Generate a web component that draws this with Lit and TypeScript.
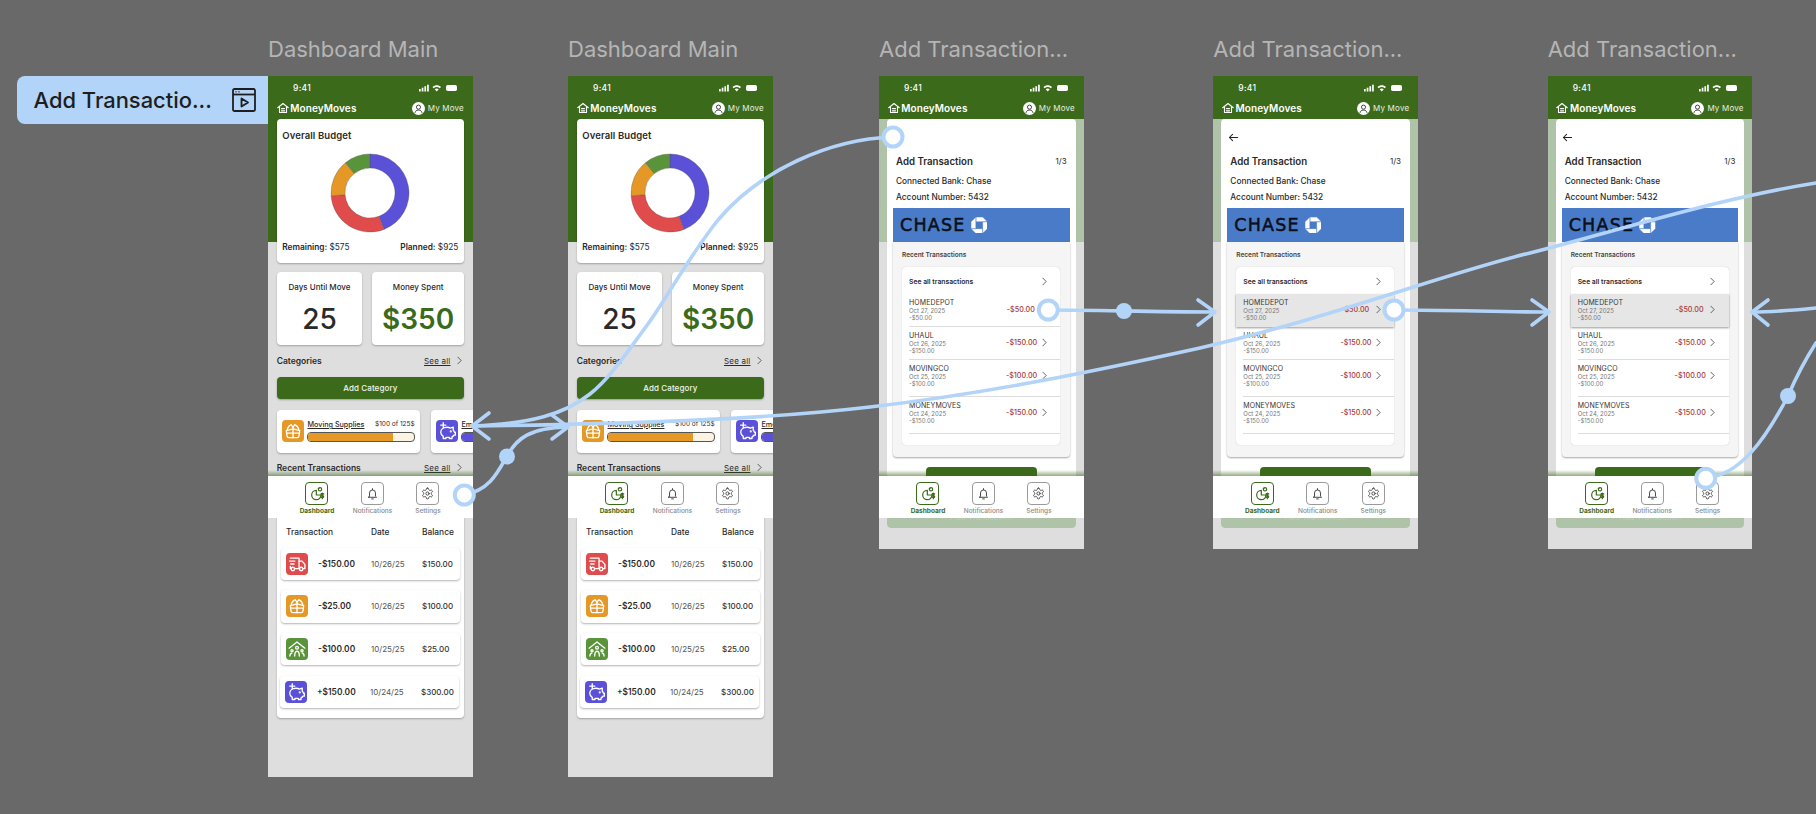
import { LitElement, html, css, svg } from "lit";
import { customElement } from "lit/decorators.js";

const GREEN = "#3a6a1a";
const F = (n: string, c: string, s: number, body: any) => html`<svg class=${n} viewBox="0 0 24 24" fill="none" stroke=${c} stroke-width=${s} stroke-linecap="round" stroke-linejoin="round">${body}</svg>`;

const truck = svg`<path d="M4 5h10.500V17.500H10"/><path d="M3 8.500h6.500M4.500 12h4"/><path d="M14.500 8.500h3.500l3.500 4V17.500h-2"/><path d="M4 15v2.500h.8"/><circle cx="7" cy="18" r="2.100"/><circle cx="17" cy="18" r="2.100"/>`;
const box = svg`<path d="M4 11.500 12 9.500l8 2-.8 6.500c-.1 1.200-1 2-2.200 2H7c-1.200 0-2.100-.8-2.200-2z"/><path d="M12 9.500V20M4.500 14.500h15"/><path d="M5 10.500C6 7 8 5 10 4.500L12 8l2-3.500c2 .5 4 2.500 5 6"/>`;
const people = svg`<path d="M2.500 11 12 3.500l9.500 7.500"/><circle cx="12" cy="10.500" r="1.700"/><path d="M9.200 20.500c0-3.500 1-5.800 2.800-5.800s2.800 2.300 2.800 5.800"/><circle cx="6" cy="14" r="1.300"/><circle cx="18" cy="14" r="1.300"/><path d="M3.500 20.500c0-2 .6-3.400 2.300-3.600M20.500 20.500c0-2-.6-3.400-2.300-3.600"/>`;
const piggy = svg`<path d="M4.500 13.500c0-3.500 3-6 7.500-6 1.500 0 3 .3 4 1l3.500-1.200v3.700c.8.800 1.200 1.500 1.500 2.500h1v3.500h-1.700c-.5 1-1.300 1.700-2.300 2.300V21h-3.200v-1.400h-4V21H7.500v-2.600C5.800 17.500 4.500 15.500 4.500 13.500z"/><path d="M7.500 2v6M4.500 5h6"/><circle cx="16.500" cy="12.500" r=".5"/>`;

const chevron = html`<svg class="chev" viewBox="0 0 6 10" fill="none" stroke="#444" stroke-width="1" stroke-linecap="round" stroke-linejoin="round"><path d="M1 1l4 4-4 4"/></svg>`;

const shared = css`
  :host { display: block; font-family: "Inter", "Liberation Sans", sans-serif; color: #2a2a2a; }
  * { box-sizing: border-box; }
  .phone { width: 204.7px; overflow: hidden; position: relative; }
  .status { height: 22px; padding: 2px 14.7px 0 25px; display: flex; align-items: center; justify-content: space-between; color: #fff; font-size: 8.500px; font-weight: 500; letter-spacing: .3px; }
  .status svg { width: 39px; height: 8px; }
  .head { height: 20px; margin-bottom: 1px; display: flex; align-items: center; padding: 0 8.7px; color: #fff; }
  .head .house { width: 12px; height: 12px; margin-right: 1.500px; }
  .brand { font-size: 10px; font-weight: 600; letter-spacing: .1px; flex: 1; }
  .avatar { width: 13px; height: 13px; margin-right: 3px; }
  .me { font-size: 8px; color: #e8efe3; letter-spacing: .2px; }
  .nav { position: absolute; left: 0; right: 0; top: 400px; height: 42.3px; background: #fff; display: flex; justify-content: center; padding: 6px 0 0 4.300px; z-index: 2; }
  .nav::before { content: ""; position: absolute; left: 0; right: 0; top: -6px; height: 6px; background: linear-gradient(rgba(58,106,26,0), rgba(58,106,26,.55)); }
  .nitem { width: 55.500px; display: flex; flex-direction: column; align-items: center; gap: 2px; font-size: 6.500px; line-height: 9px; color: #8a8a8a; font-weight: 500; white-space: nowrap; }
  .nbox { width: 23px; height: 23px; border: 1px solid #9a9a9a; border-radius: 4px; display: flex; align-items: center; justify-content: center; }
  .nbox svg { width: 13px; height: 13px; }
  .nitem.on { color: #3a6a1a; font-weight: 700; }
  .nitem.on .nbox { border-color: #3a6a1a; }
  .nitem.on .nbox svg { width: 16px; height: 16px; }
`;

const chrome = () => html`
  <div class="status"><span>9:41</span>
    <svg viewBox="0 0 39 8"><g fill="#fff"><rect x="0" y="5" width="1.700" height="2.500"/><rect x="2.700" y="3.700" width="1.700" height="3.800"/><rect x="5.400" y="2.200" width="1.700" height="5.300"/><rect x="8.100" y=".7" width="1.700" height="6.800"/><rect x="27" y="1" width="11" height="6" rx="1.800"/></g><path d="M13.500 3c2.500-2.300 6-2.300 8.500 0l-1.200 1.300c-1.800-1.600-4.300-1.600-6.100 0z M15.700 5.200c1.300-1.100 2.800-1.100 4.100 0L17.750 7.400z" fill="#fff"/></svg>
  </div>
  <div class="head">
    ${F("house", "#fff", 2.2, svg`<path d="M1.500 11.500 12 3l10.500 8.500"/><path d="M5 10v11h14V10"/><path d="M9 13h6M9 16.500h6M9 20h6"/>`)}
    <span class="brand">MoneyMoves</span>
    <svg class="avatar" viewBox="0 0 24 24"><circle cx="12" cy="12" r="12" fill="#fff"/><circle cx="12" cy="9.500" r="3.800" fill="none" stroke="#333" stroke-width="1.700"/><path d="M5.500 20c.5-3.500 3-5 6.500-5s6 1.500 6.500 5" fill="none" stroke="#333" stroke-width="1.700"/></svg>
    <span class="me">My Move</span>
  </div>`;

const nav = () => html`<div class="nav">
  <div class="nitem on"><div class="nbox">${F("", GREEN, 1.8, svg`<path d="M11 6.500a7 7 0 1 0 7 7h-7z"/><path d="M14 3.500h1"/><circle cx="16.500" cy="5" r="2.500"/><path d="M22 12c-1-1.200-4-1.200-4 .8 0 2 4 1 4 3 0 1.900-3 2-4 .6M20 10.500v8.500"/>`)}</div>Dashboard</div>
  <div class="nitem"><div class="nbox">${F("", "#444", 1.8, svg`<path d="M6.500 17v-6a5.500 5.500 0 0 1 11 0v6l2 2h-15z"/><path d="M10.500 22h3M12 3v2"/>`)}</div>Notifications</div>
  <div class="nitem"><div class="nbox">${F("", "#444", 1.7, svg`<path d="M12.220 2h-.44a2 2 0 0 0-2 2v.18a2 2 0 0 1-1 1.730l-.43.25a2 2 0 0 1-2 0l-.15-.08a2 2 0 0 0-2.730.73l-.22.38a2 2 0 0 0 .73 2.730l.15.1a2 2 0 0 1 1 1.720v.51a2 2 0 0 1-1 1.740l-.15.09a2 2 0 0 0-.73 2.730l.22.38a2 2 0 0 0 2.730.73l.15-.08a2 2 0 0 1 2 0l.43.25a2 2 0 0 1 1 1.730V20a2 2 0 0 0 2 2h.44a2 2 0 0 0 2-2v-.18a2 2 0 0 1 1-1.730l.43-.25a2 2 0 0 1 2 0l.15.08a2 2 0 0 0 2.730-.73l.22-.39a2 2 0 0 0-.73-2.730l-.15-.08a2 2 0 0 1-1-1.740v-.5a2 2 0 0 1 1-1.740l.15-.09a2 2 0 0 0 .73-2.730l-.22-.38a2 2 0 0 0-2.730-.73l-.15.08a2 2 0 0 1-2 0l-.43-.25a2 2 0 0 1-1-1.730V4a2 2 0 0 0-2-2z"/><circle cx="12" cy="12" r="3"/>`)}</div>Settings</div>
</div>`;

function arc(a0: number, a1: number, R = 39, r = 25, c = 40) {
  const p = (a: number, q: number) => { const t = (a * Math.PI) / 180; return `${(c + q * Math.sin(t)).toFixed(2)} ${(c - q * Math.cos(t)).toFixed(2)}`; };
  const big = a1 - a0 > 180 ? 1 : 0;
  return `M${p(a0, R)}A${R} ${R} 0 ${big} 1 ${p(a1, R)}L${p(a1, r)}A${r} ${r} 0 ${big} 0 ${p(a0, r)}Z`;
}

const DONUT = [
  { a: 0, b: 159, c: "#5b50d8" },
  { a: 159, b: 266, c: "#e04b4c" },
  { a: 266, b: 321, c: "#e59826" },
  { a: 321, b: 360, c: "#5a943a" },
];

const TX = [
  { c: "#e04b4c", i: truck, amt: "-$150.00", date: "10/26/25", bal: "$150.00" },
  { c: "#e59826", i: box, amt: "-$25.00", date: "10/26/25", bal: "$100.00" },
  { c: "#5a943a", i: people, amt: "-$100.00", date: "10/25/25", bal: "$25.00" },
  { c: "#5b50d8", i: piggy, amt: "+$150.00", date: "10/24/25", bal: "$300.00" },
];

@customElement("dash-phone")
class DashPhone extends LitElement {
  static styles = [shared, css`
    .phone { height: 700.7px; background: linear-gradient(#3a6a1a 166px, #dedede 166px); }
    .body { padding: 0 8.700px; }
    .card { background: #fff; border-radius: 4px; box-shadow: 0 1px 2px rgba(0,0,0,.28); }
    .overall { height: 143.700px; padding: 11px 5.600px 0; display: flex; flex-direction: column; }
    .overall h3 { margin: 0; font-size: 9.500px; line-height: 12px; font-weight: 600; letter-spacing: .1px; }
    .donut { width: 80px; height: 80px; margin: 11px auto 9px; display: block; }
    .foot { display: flex; justify-content: space-between; font-size: 8.300px; line-height: 10px; }
    .foot b { font-weight: 600; }
    .stats { display: grid; grid-template-columns: 85.600px 1fr; gap: 10px; margin-top: 9.300px; }
    .stat { height: 72.700px; display: flex; flex-direction: column; align-items: center; padding-top: 10px; font-size: 8px; line-height: 10px; font-weight: 500; }
    .num { font-size: 28px; line-height: 34px; font-weight: 500; margin-top: 10.500px; }
    .num.g { color: #3a6a1a; font-weight: 600; }
    .sec { height: 12px; display: flex; align-items: center; font-size: 8.500px; font-weight: 600; margin-top: 10.300px; }
    .sec.rt { margin-top: 9.300px; }
    .sec .t { flex: 1; white-space: nowrap; }
    .see { font-weight: 400; font-size: 8px; text-decoration: underline; margin-right: 6px; letter-spacing: .2px; }
    .chev { width: 5px; height: 9px; margin-right: 2.500px; }
    .add { height: 22.600px; margin-top: 9.700px; background: #3a6a1a; color: #f0f4ec; border-radius: 4px; display: flex; align-items: center; justify-content: center; font-size: 8px; font-weight: 500; box-shadow: 0 1px 2px rgba(0,0,0,.3); letter-spacing: .1px; }
    .cats { display: flex; gap: 10.700px; margin-top: 10.700px; width: 320px; }
    .cat { width: 143.300px; height: 42.700px; padding: 10px 5.300px; display: flex; gap: 3.500px; flex: none; }
    .tile { width: 22px; height: 22px; border-radius: 4px; flex: none; display: flex; align-items: center; justify-content: center; }
    .tile svg { width: 20px; height: 20px; }
    .cinfo { flex: 1; min-width: 0; }
    .ctop { display: flex; justify-content: space-between; align-items: center; font-size: 6.500px; line-height: 9px; height: 10px; margin-top: -.5px; }
    .ctop u { font-size: 7.200px; font-weight: 500; }
    .bar { margin-top: 3px; height: 10px; border: .7px solid #555; border-radius: 4px; background: #fdf3e2; overflow: hidden; }
    .bar i { display: block; height: 100%; }
    .recent { margin-top: 6px; height: 237.700px; padding: 46px 4.300px 0; }
    .hd, .tx { display: grid; grid-template-columns: 32px 53px 51px 1fr; align-items: center; padding-left: 5px; font-size: 8px; white-space: nowrap; }
    .hd { height: 12px; font-weight: 500; font-size: 8.400px; margin-bottom: 9.700px; }
    .hd span:first-child { grid-column: span 2; }
    .tx { height: 32.400px; margin-bottom: 10.300px; border-radius: 4px; background: #fff; box-shadow: 0 1px 2px rgba(0,0,0,.3); }
    .tx b { font-weight: 600; font-size: 8.400px; }
    .tx .d { color: #555; }
    .tx .bl { font-weight: 500; color: #333; }
    .tx.shift { margin-left: -1px; margin-right: 1px; }
  `];
  render() {
    return html`<div class="phone">
      ${chrome()}
      <div class="body">
        <div class="card overall">
          <h3>Overall Budget</h3>
          <svg class="donut" viewBox="0 0 80 80">${DONUT.map((d) => svg`<path d=${arc(d.a, d.b)} fill=${d.c} stroke="#555" stroke-width=".35"/>`)}</svg>
          <div class="foot"><span><b>Remaining:</b> $575</span><span><b>Planned:</b> $925</span></div>
        </div>
        <div class="stats">
          <div class="card stat">Days Until Move<div class="num">25</div></div>
          <div class="card stat">Money Spent<div class="num g">$350</div></div>
        </div>
        <div class="sec"><span class="t">Categories</span><span class="see">See all</span>${chevron}</div>
        <div class="add">Add Category</div>
        <div class="cats">
          <div class="card cat"><div class="tile" style="background:#e59826">${F("", "#fff", 1.6, box)}</div>
            <div class="cinfo"><div class="ctop"><u>Moving Supplies</u><span>$100 of 125$</span></div><div class="bar"><i style="width:80%;background:#e59826"></i></div></div></div>
          <div class="card cat"><div class="tile" style="background:#5b50d8">${F("", "#fff", 1.6, piggy)}</div>
            <div class="cinfo"><div class="ctop"><u>Emergency Fund</u><span>$50 of 150$</span></div><div class="bar"><i style="width:40%;background:#5b50d8"></i></div></div></div>
        </div>
        <div class="sec rt"><span class="t">Recent Transactions</span><span class="see">See all</span>${chevron}</div>
        <div class="card recent">
          <div class="hd"><span>Transaction</span><span>Date</span><span>Balance</span></div>
          ${TX.map((t, i) => html`<div class="tx ${i === 3 ? "shift" : ""}">
            <div class="tile" style="background:${t.c}">${F("", "#fff", 1.6, t.i)}</div>
            <b>${t.amt}</b><span class="d">${t.date}</span><span class="bl">${t.bal}</span></div>`)}
        </div>
      </div>
      ${nav()}
    </div>`;
  }
}

const ROWS = [
  { n: "HOMEDEPOT", d: "Oct 27, 2025", a: "$50.00", h: 32.7 },
  { n: "UHAUL", d: "Oct 26, 2025", a: "$150.00", h: 33 },
  { n: "MOVINGCO", d: "Oct 25, 2025", a: "$100.00", h: 37 },
  { n: "MONEYMOVES", d: "Oct 24, 2025", a: "$150.00", h: 37.6 },
];

@customElement("txn-phone")
class TxnPhone extends LitElement {
  static properties = { selected: { type: Boolean } };
  selected = false;
  static styles = [shared, css`
    .phone { height: 473px; background: linear-gradient(#3a6a1a 43px, #aec3a8 43px, #aec3a8 166px, #dedede 166px); }
    .sheet { margin: 0 8px; height: 409px; background: #fff; border-radius: 4px; padding: 12px 6px 0; display: flex; flex-direction: column; }
    .back { height: 12px; width: 12px; }
    .back svg { width: 11px; height: 11px; display: block; margin: .5px 0 0 .500px; }
    .tt { display: flex; justify-content: space-between; margin: 12.700px 3px 0 3px; height: 12px; align-items: center; font-size: 9.700px; font-weight: 600; }
    .tt span:last-child { font-size: 8px; font-weight: 400; transform: translateY(-1.500px); }
    .ln { padding-left: 3px; font-size: 8.300px; line-height: 10px; font-weight: 500; margin-top: 8.300px; }
    .ln + .ln { margin-top: 6px; }
    .banner { height: 34px; margin-top: 6px; background: #4a7bc8; flex: none; display: flex; align-items: center; padding-left: 7px; gap: 5px; }
    .chase { font-family: "DejaVu Sans", sans-serif; font-weight: 400; font-size: 17.500px; color: #0c0f18; letter-spacing: 1.200px; line-height: 20px; -webkit-text-stroke: .5px #0c0f18; }
    .banner svg { width: 16.500px; height: 16.500px; }
    .panel { background: #f5f5f5; height: 214.700px; padding: 9px 9.700px 0 9px; border-radius: 0 0 4px 4px; box-shadow: 0 1px 2px rgba(0,0,0,.35); flex: none; }
    .ph { font-size: 6.500px; line-height: 8px; font-weight: 600; color: #444; }
    .list { margin-top: 8.300px; height: 177.700px; background: #fff; border-radius: 4px; box-shadow: 0 0 1px rgba(0,0,0,.25); }
    .all { height: 26.700px; padding: 2px 13.300px 0 7px; display: flex; align-items: center; justify-content: space-between; font-size: 6.800px; font-weight: 600; }
    .chev { width: 5px; height: 9px; flex: none; }
    .row { margin-left: 7px; padding: 5px 13.300px 0 0; border-bottom: 1px solid #dcdcdc; display: flex; align-items: flex-start; }
    .row.sel { margin-left: 0; padding-left: 7px; background: #e6e6e6; border-bottom: 0; box-shadow: 0 1px 2px rgba(0,0,0,.4); }
    .inf { flex: 1; font-size: 6px; line-height: 7.300px; color: #777; }
    .inf b { display: block; font-size: 7px; font-weight: 400; color: #333; letter-spacing: .1px; line-height: 8px; }
    .am { font-size: 7.200px; color: #a83a3a; font-weight: 500; margin-right: 4.500px; line-height: 22px; }
    .am.first { margin-right: 6.800px; }
    .row .chev { margin-top: 6.500px; }
    .next { flex: none; width: 111px; height: 24px; margin: 10px auto 0; background: #3a6a1a; border-radius: 4px; display: flex; align-items: center; justify-content: center; color: #dfe8d8; font-size: 8px; }
    .ghost { flex: 1; margin: 0 -6px; background: #aec3a8; border-radius: 0 0 4px 4px; color: #bfcfba; font-size: 8px; display: flex; align-items: flex-end; justify-content: center; padding-bottom: 6px; }
  `];
  render() {
    return html`<div class="phone">
      ${chrome()}
      <div class="sheet">
        <div class="back">${F("", "#222", 2.2, svg`<path d="M21 12H3M10 5l-7 7 7 7"/>`)}</div>
        <div class="tt"><span>Add Transaction</span><span>1/3</span></div>
        <div class="ln">Connected Bank: Chase</div>
        <div class="ln">Account Number: 5432</div>
        <div class="banner"><span class="chase">CHASE</span>
          <svg viewBox="0 0 16 16" fill="#fff" stroke="#4a7bc8" stroke-width=".5"><polygon points="4.700,0 11.300,0 16,4.700 4.700,4.700"/><polygon points="16,4.700 16,11.300 11.300,16 11.300,4.700"/><polygon points="11.300,16 4.700,16 0,11.300 11.300,11.300"/><polygon points="0,11.300 0,4.700 4.700,0 4.700,11.300"/></svg>
        </div>
        <div class="panel">
          <div class="ph">Recent Transactions</div>
          <div class="list">
            <div class="all"><span>See all transactions</span>${chevron}</div>
            ${ROWS.map((r, i) => html`<div class="row ${i === 0 && this.selected ? "sel" : ""}" style="height:${r.h}px">
              <div class="inf"><b>${r.n}</b>${r.d}<br />-${r.a}</div>
              <span class="am ${i === 0 ? "first" : ""}">-${r.a}</span>${chevron}</div>`)}
          </div>
        </div>
        <div class="next">Next</div>
        <div class="ghost">Add Transaction</div>
      </div>
      ${nav()}
    </div>`;
  }
}

const FRAMES = [
  { x: 268, t: "Dashboard Main", k: "d" },
  { x: 568, t: "Dashboard Main", k: "d" },
  { x: 879, t: "Add Transaction...", k: "t" },
  { x: 1213.3, t: "Add Transaction...", k: "s" },
  { x: 1547.7, t: "Add Transaction...", k: "s" },
];

@customElement("app-root")
export class AppRoot extends LitElement {
  static styles = css`
    :host { display: block; width: 1816px; height: 814px; position: relative; overflow: hidden; background: #696969; font-family: "Inter", "Liberation Sans", sans-serif; }
    * { box-sizing: border-box; }
    .frame { position: absolute; top: 35px; }
    .title { height: 41px; font-size: 22px; line-height: 28px; color: #b5b5b5; white-space: nowrap; }
    .pill { position: absolute; left: 17.300px; top: 76px; width: 250.700px; height: 47.700px; background: #b3d4f9; border-radius: 8px 0 0 8px; display: flex; align-items: center; padding: 0 12px 0 16.300px; justify-content: space-between; color: #1e1e1e; font-size: 21.900px; font-weight: 500; white-space: nowrap; }
    .pill svg { width: 24px; height: 24px; flex: none; }
    .wires { position: absolute; inset: 0; width: 1816px; height: 814px; pointer-events: none; z-index: 5; }
  `;
  render() {
    const W = "#b3d4f9";
    return html`
      ${FRAMES.map((f) => html`<div class="frame" style="left:${f.x}px">
        <div class="title">${f.t}</div>
        ${f.k === "d" ? html`<dash-phone></dash-phone>` : html`<txn-phone ?selected=${f.k === "s"}></txn-phone>`}
      </div>`)}
      <div class="pill"><span>Add Transactio...</span>
        <svg viewBox="0 0 24 24" fill="none" stroke="#1e1e1e" stroke-width="1.800" stroke-linejoin="round"><rect x="1" y="1" width="22" height="22" rx="1.500"/><path d="M1 6.500h22"/><path d="M3.500 3.800h1M6.500 3.800h1" stroke-width="1.500"/><path d="M9.500 10.500l6.500 4-6.500 4z"/></svg>
      </div>
      <svg class="wires" viewBox="0 0 1816 814" fill="none" stroke=${W} stroke-width="3.600" stroke-linecap="round" stroke-linejoin="round">
        <path d="M464 495C490 490 498 472 507 456C517 438 530 428 567 427"/>
        <path d="M552 415L568 427L552 439"/>
        <path d="M893 137C830 139 760 170 718 220C690 255 668 296 648 324C625 355 610 378 590 394C565 414 530 424 473 426"/>
        <path d="M472 426C620 424 760 420 870 407C990 393 1100 370 1200 348C1330 318 1450 272 1530 253C1620 230 1720 198 1816 183"/>
        <path d="M489 413L472 426L489 439"/>
        <path d="M1048 310C1100 310 1150 312 1214 312"/>
        <path d="M1198 300L1215 312L1198 325"/>
        <path d="M1394 310C1450 310 1500 312 1547 312"/>
        <path d="M1532 300L1549 312L1532 325"/>
        <path d="M1752 312C1775 312 1795 310 1816 308"/>
        <path d="M1768 300L1752 312L1768 325"/>
        <path d="M1706 478C1740 475 1765 440 1788 396C1797 375 1805 360 1816 343"/>
        <g fill=${W} stroke="none"><circle cx="507" cy="456.500" r="8"/><circle cx="1124" cy="311" r="8"/><circle cx="1788" cy="396" r="8"/></g>
        <g fill="#fff" stroke-width="4"><circle cx="464.300" cy="495" r="9.500"/><circle cx="893" cy="137" r="9.500"/><circle cx="1048.300" cy="310" r="9.500"/><circle cx="1394" cy="310" r="9.500"/><circle cx="1705.700" cy="478.300" r="9.500"/></g>
      </svg>`;
  }
}
